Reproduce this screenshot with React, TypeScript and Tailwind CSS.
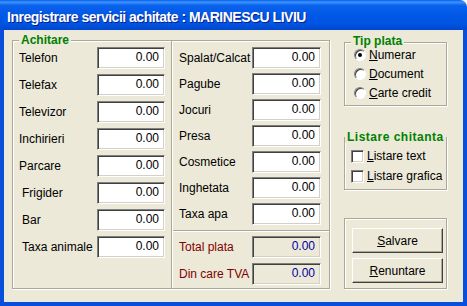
import React from "react";

const leftRows = [
  { label: "Telefon", indent: false },
  { label: "Telefax", indent: false },
  { label: "Televizor", indent: false },
  { label: "Inchirieri", indent: false },
  { label: "Parcare", indent: false },
  { label: "Frigider", indent: true },
  { label: "Bar", indent: true },
  { label: "Taxa animale", indent: true },
];

const midRows = ["Spalat/Calcat", "Pagube", "Jocuri", "Presa", "Cosmetice", "Inghetata", "Taxa apa"];

// camp numeric cu chenar "sunken" clasic
function Field({ value = "0.00", disabled = false, w = "w-[68px]" }: { value?: string; disabled?: boolean; w?: string }) {
  return (
    <div
      className={`${w} h-[22px] flex items-center justify-end pr-[5px] pb-[3px] border border-t-[#808080] border-l-[#808080] border-b-white border-r-white shadow-[inset_1px_1px_0_#404040,inset_-1px_-1px_0_#d4d0c8] ${
        disabled ? "bg-[#ece9d8] text-[#0000a0]" : "bg-white text-black"
      }`}
    >
      {value}
    </div>
  );
}

function Group({
  title,
  className,
  titleClass = "left-[6px] top-[-7px]",
  children,
}: {
  title?: string;
  className: string;
  titleClass?: string;
  children?: React.ReactNode;
}) {
  return (
    <div className={`relative border border-[#aca899] shadow-[inset_1px_1px_0_#fff,1px_1px_0_#fff] ${className}`}>
      {title && (
        <span className={`absolute ${titleClass} px-[2px] bg-[#ece9d8] font-bold text-[#008000] leading-[12px] whitespace-nowrap`}>
          {title}
        </span>
      )}
      {children}
    </div>
  );
}

function Radio({ checked, children }: { checked?: boolean; children: React.ReactNode }) {
  return (
    <div className="h-[16px] flex items-center gap-[3px]">
      <div className="w-[12px] h-[12px] rounded-full bg-white border border-t-[#808080] border-l-[#808080] border-b-white border-r-white shadow-[inset_1px_1px_0_#404040] flex items-center justify-center">
        {checked && <div className="w-[4px] h-[4px] rounded-full bg-black" />}
      </div>
      <span className="leading-[12px]">{children}</span>
    </div>
  );
}

function Check({ children }: { children: React.ReactNode }) {
  return (
    <div className="h-[16px] flex items-center gap-[3px]">
      <div className="w-[13px] h-[13px] bg-white border border-t-[#808080] border-l-[#808080] border-b-white border-r-white shadow-[inset_1px_1px_0_#404040,inset_-1px_-1px_0_#d4d0c8]" />
      <span className="leading-[12px]">{children}</span>
    </div>
  );
}

function Button({ children }: { children: React.ReactNode }) {
  return (
    <div className="w-[91px] h-[25px] flex items-center justify-center border border-t-white border-l-white border-b-[#404040] border-r-[#404040] shadow-[inset_-1px_-1px_0_#aca899] bg-[#ece9d8]">
      {children}
    </div>
  );
}

export default function App() {
  return (
    <div className="w-[467px] h-[306px] bg-white flex flex-col font-['Liberation_Sans',Arial,sans-serif] text-[12px] leading-[14px] text-black select-none">
      {/* Bara de titlu */}
      <div className="h-[30px] shrink-0 rounded-tr-[7px] flex items-center pl-[7px] pt-[4px] text-white font-bold text-[14px] leading-none tracking-[-0.5px] [text-shadow:1px_1px_0_#0a1e8a] bg-[linear-gradient(to_bottom,#0a5ee8_0%,#3d95ff_7%,#0a62ec_18%,#0058e6_50%,#0054e2_80%,#0046cc_100%)]">
        Inregistrare servicii achitate : MARINESCU LIVIU
      </div>

      {/* Zona client */}
      <div className="flex-1 flex pl-[8px] pt-[10px] bg-[#ece9d8] border-x-4 border-b-4 border-[#0a4fdc]">
        <Group title="Achitare" className="w-[318px] h-[249px] flex">
          {/* coloana stanga */}
          <div className="w-[158px] flex flex-col gap-[5px] pt-[6px] pl-[6px]">
            {leftRows.map((r) => (
              <div key={r.label} className="h-[22px] flex items-center">
                <span className={`w-[78px] whitespace-nowrap ${r.indent ? "pl-[3px]" : ""}`}>{r.label}</span>
                <Field />
              </div>
            ))}
          </div>

          <div className="w-[2px] border-l border-l-[#aca899] border-r border-r-white" />

          {/* coloana din mijloc */}
          <div className="flex-1 flex flex-col pt-[6px]">
            <div className="flex flex-col gap-[4px] pl-[6px]">
              {midRows.map((l) => (
                <div key={l} className="h-[22px] flex items-center">
                  <span className="w-[73px] whitespace-nowrap">{l}</span>
                  <Field w="w-[69px]" />
                </div>
              ))}
            </div>
            <div className="mt-[5px] h-[2px] border-t border-t-[#aca899] border-b border-b-white" />
            <div className="flex flex-col gap-[5px] pl-[6px] mt-[4px] text-[#800000]">
              <div className="h-[22px] flex items-center">
                <span className="w-[73px]">Total plata</span>
                <Field w="w-[69px]" disabled />
              </div>
              <div className="h-[22px] flex items-center">
                <span className="w-[73px] whitespace-nowrap">Din care TVA</span>
                <Field w="w-[69px]" disabled />
              </div>
            </div>
          </div>
        </Group>

        {/* coloana dreapta */}
        <div className="ml-[14px] w-[103px] flex flex-col mt-[2px]">
          <Group title="Tip plata" titleClass="left-[6px] top-[-8px]" className="h-[64px] flex flex-col gap-[3px] pt-[4px] pl-[9px]">
            <Radio checked>
              <span className="underline">N</span>umerar
            </Radio>
            <Radio>
              <span className="underline">D</span>ocument
            </Radio>
            <Radio>
              <span className="underline">C</span>arte credit
            </Radio>
          </Group>

          <Group
            title="Listare chitanta"
            titleClass="left-0 top-[-7px] tracking-[0.5px]"
            className="mt-[31px] h-[53px] flex flex-col gap-[4px] pt-[10px] pl-[6px]"
          >
            <Check>
              <span className="underline">L</span>istare text
            </Check>
            <Check>
              <span className="underline">L</span>istare grafica
            </Check>
          </Group>

          <Group className="mt-[28px] h-[71px] flex flex-col gap-[5px] pt-[9px] pl-[7px]">
            <Button>
              <span className="underline">S</span>alvare
            </Button>
            <Button>
              <span className="underline">R</span>enuntare
            </Button>
          </Group>
        </div>
      </div>
    </div>
  );
}
